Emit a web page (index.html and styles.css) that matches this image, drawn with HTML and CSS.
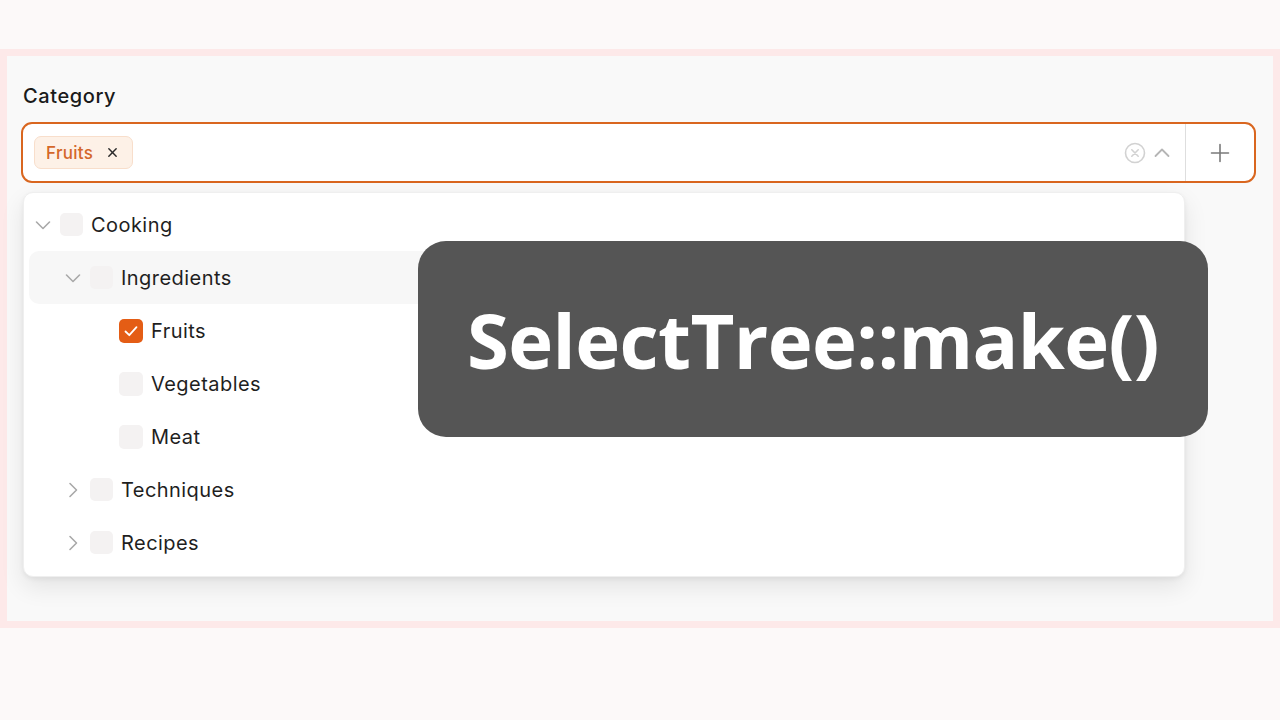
FILE: index.html
```html
<!DOCTYPE html>
<html lang="en">
<head>
<meta charset="utf-8">
<title>SelectTree</title>
<link rel="stylesheet" href="styles.css">
</head>
<body>
<div class="page">
  <section class="panel">
    <label class="label">Category</label>
    <div class="field-wrap">
      <div class="field">
        <div class="field-main">
          <span class="tag">Fruits
            <svg class="tag-x" viewBox="0 0 12 12" width="11" height="11"><path d="M2 2L10 10M10 2L2 10" stroke="#2b2b2b" stroke-width="1.6" stroke-linecap="round"/></svg>
          </span>
          <div class="field-icons">
            <svg viewBox="0 0 22 22" width="22" height="22"><circle cx="11" cy="11" r="9.5" fill="none" stroke="#d2d2d2" stroke-width="1.6"/><path d="M7.8 7.8L14.2 14.2M14.2 7.8L7.8 14.2" stroke="#d2d2d2" stroke-width="1.6" stroke-linecap="round"/></svg>
            <svg viewBox="0 0 20 20" width="20" height="20"><path d="M3.5 13L10 6.5L16.5 13" fill="none" stroke="#b5b5b5" stroke-width="1.8" stroke-linecap="round" stroke-linejoin="round"/></svg>
          </div>
        </div>
        <div class="field-add">
          <svg viewBox="0 0 22 22" width="22" height="22"><path d="M11 2.5V19.5M2.5 11H19.5" stroke="#7a7a7a" stroke-width="1.6" stroke-linecap="round"/></svg>
        </div>
      </div>
      <div class="dropdown">
        <div class="row lvl0">
          <span class="chev"><svg viewBox="0 0 20 20" width="20" height="20"><path d="M3.5 7L10 13.5L16.5 7" fill="none" stroke="#a9a9a9" stroke-width="1.6" stroke-linecap="round" stroke-linejoin="round"/></svg></span>
          <span class="box"></span><span class="txt">Cooking</span>
        </div>
        <div class="row lvl1 hl">
          <span class="chev"><svg viewBox="0 0 20 20" width="20" height="20"><path d="M3.5 7L10 13.5L16.5 7" fill="none" stroke="#a9a9a9" stroke-width="1.6" stroke-linecap="round" stroke-linejoin="round"/></svg></span>
          <span class="box"></span><span class="txt">Ingredients</span>
        </div>
        <div class="row lvl2">
          <span class="chev"></span>
          <span class="box checked"><svg viewBox="0 0 20 20" width="20" height="20"><path d="M4.5 10.5L8.3 14.2L15.5 6.2" fill="none" stroke="#fff" stroke-width="1.8" stroke-linecap="round" stroke-linejoin="round"/></svg></span><span class="txt">Fruits</span>
        </div>
        <div class="row lvl2">
          <span class="chev"></span>
          <span class="box"></span><span class="txt">Vegetables</span>
        </div>
        <div class="row lvl2">
          <span class="chev"></span>
          <span class="box"></span><span class="txt">Meat</span>
        </div>
        <div class="row lvl1">
          <span class="chev"><svg viewBox="0 0 20 20" width="20" height="20"><path d="M7 3.5L13.5 10L7 16.5" fill="none" stroke="#a9a9a9" stroke-width="1.6" stroke-linecap="round" stroke-linejoin="round"/></svg></span>
          <span class="box"></span><span class="txt">Techniques</span>
        </div>
        <div class="row lvl1">
          <span class="chev"><svg viewBox="0 0 20 20" width="20" height="20"><path d="M7 3.5L13.5 10L7 16.5" fill="none" stroke="#a9a9a9" stroke-width="1.6" stroke-linecap="round" stroke-linejoin="round"/></svg></span>
          <span class="box"></span><span class="txt">Recipes</span>
        </div>
      </div>
    </div>
  </section>
  <div class="banner">SelectTree::make()</div>
</div>
</body>
</html>
```

FILE: styles.css
```css
html, body {
  margin: 0;
  padding: 0;
}
body {
  background: #fcf9f9;
  font-family: Inter, "Noto Sans", "Liberation Sans", sans-serif;
  color: #1c1c1c;
  width: 1280px;
  height: 720px;
  overflow: hidden;
}
.page {
  position: relative;
  padding-top: 49px;
}
.panel {
  box-sizing: border-box;
  height: 579px;
  border: 7px solid #fde9e9;
  background: #f9f9f9;
  padding: 25px 17px 0 14px;
}
.label {
  display: block;
  font-size: 20px;
  font-weight: 500;
  line-height: 30px;
  letter-spacing: 0.6px;
  margin-left: 2px;
  color: #1a1a1a;
}
.field-wrap {
  position: relative;
  margin-top: 11px;
}
.field {
  box-sizing: border-box;
  height: 61px;
  border: 2px solid #d9661f;
  border-radius: 11px;
  background: #fff;
  display: flex;
}
.field-main {
  flex: 1;
  display: flex;
  align-items: center;
  justify-content: space-between;
  padding: 0 0 0 11px;
}
.tag {
  box-sizing: border-box;
  height: 33px;
  width: 99px;
  display: inline-flex;
  align-items: center;
  gap: 14px;
  padding: 0 11px;
  background: #fdf1e7;
  border: 1px solid #f8decb;
  border-radius: 7px;
  color: #d4672a;
  font-size: 17px;
  font-weight: 500;
  letter-spacing: 0.3px;
}
.field-icons {
  display: flex;
  align-items: center;
  gap: 6px;
  padding-right: 13px;
}
.field-add {
  width: 68px;
  border-left: 1px solid #dedede;
  display: flex;
  align-items: center;
  justify-content: center;
}
.dropdown {
  position: absolute;
  left: 2px;
  top: 70px;
  width: 1162px;
  box-sizing: border-box;
  padding: 5px 6px 7px 6px;
  background: #fff;
  border: 1px solid #efefef;
  border-radius: 10px;
  box-shadow: 0 10px 24px rgba(0,0,0,0.09), 0 2px 5px rgba(0,0,0,0.06);
}
.row {
  height: 53px;
  display: flex;
  align-items: center;
  border-radius: 10px;
  font-size: 20px;
  letter-spacing: 0.45px;
}
.row.hl {
  background: #f7f7f7;
  margin-left: -1px;
}
.lvl0 { padding-left: 3px; }
.lvl1 { padding-left: 33px; }
.row.hl.lvl1 { padding-left: 34px; }
.lvl2 { padding-left: 63px; }
.chev {
  width: 20px;
  height: 20px;
  display: flex;
}
.box {
  width: 23px;
  height: 23px;
  margin-left: 7px;
  border-radius: 5px;
  background: #f4f2f2;
  display: flex;
  align-items: center;
  justify-content: center;
}
.lvl2 .box {
  width: 24px;
  height: 24px;
  margin-left: 6px;
}
.box.checked {
  background: #e45d15;
}
.txt {
  margin-left: 8px;
  color: #1f1f1f;
}
.banner {
  position: absolute;
  left: 418px;
  top: 241px;
  width: 790px;
  height: 196px;
  border-radius: 28px;
  background: #555555;
  color: #fff;
  display: flex;
  align-items: center;
  justify-content: center;
  font-family: "Open Sans", "Noto Sans", sans-serif;
  font-weight: 700;
  font-size: 76px;
  letter-spacing: -0.6px;
}
```
